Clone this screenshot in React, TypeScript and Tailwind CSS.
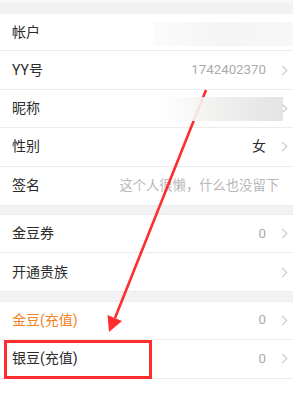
import React from 'react';

interface RowProps {
  label: string;
  value?: string;
  valueClass?: string;
  labelClass?: string;
  chevron?: boolean;
  blur?: 'account' | 'nick';
  h?: string;
}

const Chevron = () => (
  <svg className="w-[7px] h-[11px] ml-[15px] shrink-0" viewBox="0 0 7 11" fill="none" stroke="#c8c8c8" strokeWidth="1.1">
    <path d="M1 0.8l4.8 4.7L1 10.2" />
  </svg>
);

const Row: React.FC<RowProps> = ({ label, value, valueClass = 'text-[13.3px] text-[#ababab]', labelClass = 'text-[#2b2b2b]', chevron = true, blur, h = 'h-[38.4px]' }) => (
  <div className={`relative ${h} flex items-center pl-3 pr-[5px] bg-white border-b border-[#ececec]`}>
    <span className={`text-[14px] ${labelClass}`}>{label}</span>
    <div className="flex-1" />
    {value && <span className={valueClass}>{value}</span>}
    {chevron ? <Chevron /> : <span className="w-[14px]" />}
    {blur === 'account' && (
      <div className="absolute z-20 left-[153px] right-0 top-[8px] bottom-[4px] bg-gradient-to-r from-[#fbfbfb] via-[#f4f4f4] to-[#f7f7f7] opacity-95" />
    )}
    {blur === 'nick' && (
      <div className="absolute z-20 left-[162px] w-[121px] top-[7px] bottom-[6px] bg-gradient-to-r from-white/90 via-[#efeeed] to-[#e2e2e2] opacity-95" />
    )}
  </div>
);

export default function App() {
  return (
    <div className="relative w-[293px] h-[399px] overflow-hidden bg-white" style={{ fontFamily: 'Roboto, "Noto Sans CJK SC", sans-serif' }}>
      <div className="h-[14px] bg-[#f2f2f2] border-t-[3px] border-[#f7f7f7]" />
      <Row label="帐户" chevron={false} blur="account" h="h-[37.4px]" />
      <Row label="YY号" value="1742402370" />
      <Row label="昵称" blur="nick" />
      <Row label="性别" value="女" valueClass="text-[14px] text-[#2b2b2b]" />
      <div className="h-[38.4px] flex items-center pl-3 pr-[14px] bg-white">
        <span className="text-[14px] text-[#2b2b2b]">签名</span>
        <div className="flex-1" />
        <span className="text-[13.3px] text-[#b8b8b8]">这个人很懒，什么也没留下</span>
      </div>
      <div className="h-[10px] bg-[#f2f2f2] border-y border-[#ececec]" />
      <Row label="金豆券" value="0" />
      <Row label="开通贵族" />
      <div className="h-[10px] bg-[#f2f2f2] border-b border-[#ececec]" />
      <Row label="金豆(充值)" value="0" labelClass="text-[#f3831f]" />
      <Row label="银豆(充值)" value="0" />

      {/* annotation arrow */}
      <svg className="absolute z-10 left-0 top-0 w-[293px] h-[399px] pointer-events-none" viewBox="0 0 293 399">
        <line x1="206" y1="90" x2="115" y2="318" stroke="#ff2e2e" strokeWidth="2.6" />
        <polygon points="109,332 107.5,315 122,321" fill="#ff2e2e" />
      </svg>
      <div className="absolute z-10 left-[4px] top-[340px] w-[148px] h-[39px] border-[3px] border-[#ff2e2e]" />
    </div>
  );
}
